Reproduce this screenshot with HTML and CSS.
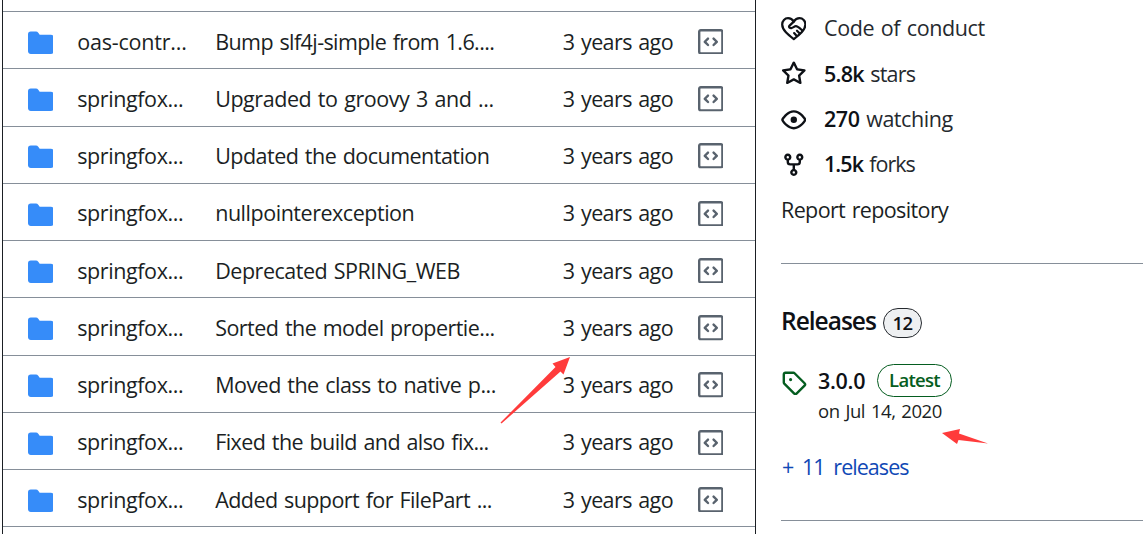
FILE: index.html
```html
<!DOCTYPE html>
<html lang="en">
<head>
<meta charset="utf-8">
<title>Repository</title>
<link rel="stylesheet" href="styles.css">
</head>
<body>
<svg class="defs" width="0" height="0">
  <symbol id="folder" viewBox="0 0 16 16"><path d="M1.75 1A1.75 1.75 0 0 0 0 2.75v10.5C0 14.216.784 15 1.75 15h12.5A1.75 1.75 0 0 0 16 13.250v-8.5A1.75 1.75 0 0 0 14.250 3H7.500a.25.25 0 0 1-.2-.1l-.9-1.200C6.070 1.260 5.550 1 5 1H1.750Z"/></symbol>
  <symbol id="code" viewBox="0 0 16 16"><path d="M0 1.75C0 .784.784 0 1.75 0h12.5C15.216 0 16 .784 16 1.75v12.5A1.75 1.75 0 0 1 14.25 16H1.75A1.75 1.75 0 0 1 0 14.25Zm1.75-.25a.25.25 0 0 0-.25.25v12.5c0 .138.112.25.25.25h12.5a.25.25 0 0 0 .25-.25V1.75a.25.25 0 0 0-.25-.25Zm7.47 3.97a.75.75 0 0 1 1.06 0l2 2a.75.75 0 0 1 0 1.06l-2 2a.749.749 0 0 1-1.275-.326.749.749 0 0 1 .215-.734L10.69 8 9.22 6.53a.75.75 0 0 1 0-1.06ZM6.78 6.53 5.31 8l1.47 1.47a.749.749 0 0 1-.326 1.275.749.749 0 0 1-.734-.215l-2-2a.75.75 0 0 1 0-1.06l2-2a.751.751 0 0 1 1.042.018.751.751 0 0 1 .018 1.042Z"/></symbol>
</svg>
<div class="page">
  <main class="files">
    <div class="row"><svg class="folder"><use href="#folder"/></svg><span class="name n1">oas-contr...</span><span class="msg m1">Bump slf4j-simple from 1.6....</span><span class="age">3 years ago</span><svg class="code"><use href="#code"/></svg></div>
    <div class="row"><svg class="folder"><use href="#folder"/></svg><span class="name">springfox...</span><span class="msg m2">Upgraded to groovy 3 and ...</span><span class="age">3 years ago</span><svg class="code"><use href="#code"/></svg></div>
    <div class="row"><svg class="folder"><use href="#folder"/></svg><span class="name">springfox...</span><span class="msg m3">Updated the documentation</span><span class="age">3 years ago</span><svg class="code"><use href="#code"/></svg></div>
    <div class="row"><svg class="folder"><use href="#folder"/></svg><span class="name">springfox...</span><span class="msg m4">nullpointerexception</span><span class="age">3 years ago</span><svg class="code"><use href="#code"/></svg></div>
    <div class="row"><svg class="folder"><use href="#folder"/></svg><span class="name">springfox...</span><span class="msg m5">Deprecated SPRING_WEB</span><span class="age">3 years ago</span><svg class="code"><use href="#code"/></svg></div>
    <div class="row"><svg class="folder"><use href="#folder"/></svg><span class="name">springfox...</span><span class="msg m6">Sorted the model propertie...</span><span class="age">3 years ago</span><svg class="code"><use href="#code"/></svg></div>
    <div class="row"><svg class="folder"><use href="#folder"/></svg><span class="name">springfox...</span><span class="msg m7">Moved the class to native p...</span><span class="age">3 years ago</span><svg class="code"><use href="#code"/></svg></div>
    <div class="row"><svg class="folder"><use href="#folder"/></svg><span class="name">springfox...</span><span class="msg m8">Fixed the build and also fix...</span><span class="age">3 years ago</span><svg class="code"><use href="#code"/></svg></div>
    <div class="row"><svg class="folder"><use href="#folder"/></svg><span class="name">springfox...</span><span class="msg m9">Added support for FilePart ...</span><span class="age">3 years ago</span><svg class="code"><use href="#code"/></svg></div>
    <div class="row"></div>
  </main>
  <aside class="side">
    <ul class="about">
      <li><svg viewBox="0 0 16 16"><g fill="none" stroke="currentColor" stroke-width="1.4" stroke-linecap="round" stroke-linejoin="round"><path d="M8 14.400C4.500 11.700.75 8.800.75 5.300.75 3 2.400 1.400 4.400 1.400c1.500 0 2.800.8 3.600 2.100C8.800 2.200 10.100 1.400 11.600 1.400c2 0 3.650 1.600 3.650 3.900 0 3.500-3.750 6.400-7.250 9.100Z"/><path d="M8 3.500 5.200 6.200c-.6.700.5 1.600 1.500 1.300 1-.3 1.700-1.100 2.600-1.100 1.300 0 2.900 1.700 4.100 2.700M10 9.200l1.700 1.700M8.200 10.700l1.500 1.700"/></g></svg><span class="coc">Code of conduct</span></li>
      <li><svg viewBox="0 0 16 16"><path d="M8 .25a.75.75 0 0 1 .673.418l1.882 3.815 4.210.612a.75.75 0 0 1 .416 1.279l-3.046 2.970.719 4.192a.751.751 0 0 1-1.088.791L8 12.347l-3.766 1.980a.75.75 0 0 1-1.088-.790l.720-4.194L.818 6.374a.75.75 0 0 1 .416-1.280l4.210-.611L7.327.668A.75.75 0 0 1 8 .25Zm0 2.445L6.615 5.500a.75.75 0 0 1-.564.410l-3.097.450 2.240 2.184a.75.75 0 0 1 .216.664l-.528 3.084 2.769-1.456a.75.75 0 0 1 .698 0l2.770 1.456-.530-3.084a.75.75 0 0 1 .216-.664l2.240-2.183-3.096-.450a.75.75 0 0 1-.564-.410L8 2.694Z"/></svg><span class="stars"><b>5.8k</b> stars</span></li>
      <li><svg viewBox="0 0 16 16"><path d="M8 2c1.981 0 3.671.992 4.933 2.078 1.270 1.091 2.187 2.345 2.637 3.023a1.620 1.620 0 0 1 0 1.798c-.450.678-1.367 1.932-2.637 3.023C11.670 13.008 9.981 14 8 14c-1.981 0-3.671-.992-4.933-2.078C1.797 10.830.880 9.576.430 8.898a1.620 1.620 0 0 1 0-1.798c.450-.677 1.367-1.931 2.637-3.022C4.330 2.992 6.019 2 8 2ZM1.679 7.932a.12.12 0 0 0 0 .136c.411.622 1.241 1.750 2.366 2.717C5.176 11.758 6.527 12.500 8 12.500c1.473 0 2.825-.742 3.955-1.715 1.124-.967 1.954-2.096 2.366-2.717a.12.12 0 0 0 0-.136c-.412-.621-1.242-1.750-2.366-2.717C10.824 4.242 9.473 3.500 8 3.500c-1.473 0-2.825.742-3.955 1.715-1.124.967-1.954 2.096-2.366 2.717ZM8 10a2 2 0 1 1 0-4 2 2 0 0 1 0 4Z"/></svg><span class="watch"><b>270</b> watching</span></li>
      <li><svg viewBox="0 0 16 16"><path d="M5 5.372v.878c0 .414.336.75.750.750h4.500a.75.750 0 0 0 .750-.750v-.878a2.250 2.250 0 1 1 1.500 0v.878a2.250 2.250 0 0 1-2.250 2.250h-1.500v2.128a2.251 2.251 0 1 1-1.500 0V8.500h-1.500A2.250 2.250 0 0 1 3.500 6.250v-.878a2.250 2.250 0 1 1 1.500 0ZM5 3.250a.75.75 0 1 0-1.500 0 .75.75 0 0 0 1.500 0Zm6.750.750a.75.75 0 1 0 0-1.500.75.75 0 0 0 0 1.500Zm-3 8.750a.75.75 0 1 0-1.500 0 .75.75 0 0 0 1.500 0Z"/></svg><span class="forks"><b>1.5k</b> forks</span></li>
    </ul>
    <p class="report"><span>Report repository</span></p>
    <section class="releases">
      <h2><span class="title">Releases</span><span class="count">12</span></h2>
      <div class="release">
        <svg class="tag" viewBox="0 0 16 16"><path d="M1 7.775V2.750C1 1.784 1.784 1 2.750 1h5.025c.464 0 .910.184 1.238.513l6.250 6.250a1.750 1.750 0 0 1 0 2.474l-5.026 5.026a1.750 1.750 0 0 1-2.474 0l-6.250-6.250A1.752 1.752 0 0 1 1 7.775Zm1.500 0c0 .066.026.130.073.177l6.250 6.250a.25.25 0 0 0 .354 0l5.025-5.025a.25.25 0 0 0 0-.354l-6.250-6.250a.25.25 0 0 0-.177-.073H2.750a.25.25 0 0 0-.250.250ZM6 5a1 1 0 1 1 0 2 1 1 0 0 1 0-2Z"/></svg>
        <div>
          <div class="version"><span class="ver">3.0.0</span><span class="latest">Latest</span></div>
          <div class="date"><span>on Jul 14, 2020</span></div>
        </div>
      </div>
      <p class="more"><span>+ 11 releases</span></p>
    </section>
  </aside>
  <svg class="arrows" viewBox="0 0 1143 534"><path d="M570 357 552.500 363.500 555.500 367 500.500 422.500 501.500 423.500 560.500 371.500 563.500 374.500ZM942 433 960 429 959 433.500 988 443.500 958.500 440 957 444Z"/></svg>
</div>
</body>
</html>
```
FILE: styles.css
```css
* { box-sizing: border-box; }
body { margin: 0; background: #fff; color: #1b1f24; font: 21.5px/32px "Open Sans", "Noto Sans", sans-serif; word-spacing: 1.5px; overflow: hidden; }
svg { fill: currentColor; flex: none; }
.defs { position: absolute; }
.page { position: relative; display: flex; width: 1143px; height: 534px; }
.files { width: 754px; height: 534px; margin-left: 2px; padding-top: 11px; border: solid #1b1f24; border-width: 0 1px; overflow: hidden; flex: none; }
.row { display: grid; grid-template-columns: 49.6px 138px 347.6px 135px 26px; align-items: center; height: 57.25px; padding: 5px 0 0 24.6px; border-top: 1px solid #868f99; white-space: nowrap; }
.folder { width: 25.6px; height: 25.6px; color: #368cf9; }
.code { width: 25.6px; height: 25.6px; color: #59636e; margin-top: -2px; }
.name, .msg, .age { margin-top: -2px; }
.name { letter-spacing: -0.4px; }
.n1 { letter-spacing: -0.2px; }
.age { letter-spacing: -0.6px; }
.m1 { letter-spacing: -0.59px; }
.m2 { letter-spacing: -0.45px; }
.m3 { letter-spacing: -0.53px; }
.m4 { letter-spacing: -0.47px; }
.m5 { letter-spacing: -0.48px; }
.m6 { letter-spacing: -0.54px; }
.m7 { letter-spacing: -0.53px; }
.m8 { letter-spacing: -0.58px; }
.m9 { letter-spacing: -0.57px; }
.side { width: 362px; margin-left: 25px; white-space: nowrap; }
.about { list-style: none; margin: 0; padding: 6px 0 0; }
.about li { display: flex; align-items: center; gap: 17.600px; height: 45.4px; color: #25292e; }
.about li span { margin-top: -1px; }
.about svg { width: 25.6px; height: 25.6px; color: #0e1116; margin-left: -0.2px; }
.coc { letter-spacing: -0.4px; }
.stars { letter-spacing: -0.75px; }
.watch { letter-spacing: -0.45px; }
.forks { letter-spacing: -0.95px; }
b { font-weight: 600; color: #0e1116; }
.report { margin: 6px 0 0; height: 70.3px; border-bottom: 1px solid #868f99; letter-spacing: -0.62px; }
.releases { height: 257px; padding-top: 40px; border-bottom: 1px solid #868f99; }
h2 { display: flex; align-items: center; gap: 7px; margin: 0; font-size: 24.5px; font-weight: 600; color: #0e1116; }
.title { width: 95px; letter-spacing: -1px; }
.count { width: 39px; height: 30px; margin-top: 4px; border: 1px solid #25292e; border-radius: 15px; background: #eef0f2; font-size: 18.500px; line-height: 28px; text-align: center; letter-spacing: -0.5px; }
.release { display: flex; gap: 11.4px; margin-top: 26px; }
.tag { width: 25.600px; height: 25.6px; margin-top: 6px; color: #055d20; }
.version { display: flex; gap: 12px; height: 33px; font-weight: 600; color: #0e1116; }
.ver { width: 47px; padding-top: 1px; letter-spacing: -0.3px; }
.latest { width: 75px; height: 33px; border: 1px solid #055d20; border-radius: 17px; color: #055d20; font-size: 18.500px; line-height: 29px; text-align: center; letter-spacing: -0.7px; }
.date { font-size: 18.500px; line-height: 28px; letter-spacing: -0.45px; }
.more { margin: 26px 0 0 1px; color: #1048b5; letter-spacing: -0.95px; word-spacing: 4px; }
.arrows { position: absolute; left: 0; top: 0; width: 1143px; height: 534px; color: #ff3b3b; }
```
